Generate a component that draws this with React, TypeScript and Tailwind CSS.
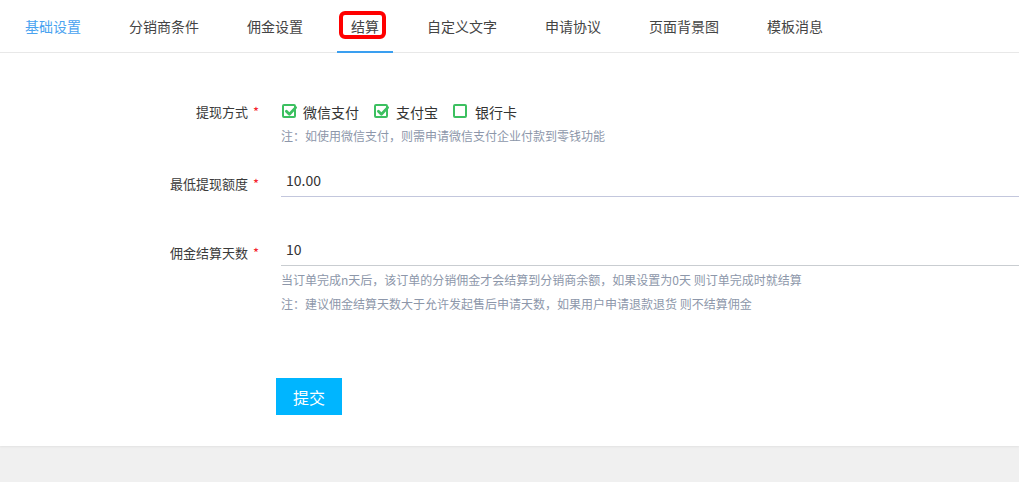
import React from "react";

const tabs = ["基础设置", "分销商条件", "佣金设置", "结算", "自定义文字", "申请协议", "页面背景图", "模板消息"];

function Check({ checked }: { checked: boolean }) {
  return (
    <span className="relative inline-flex h-[14px] w-[14px] items-center justify-center rounded-[2px] border-2 border-[#3cc060] bg-white">
      {checked && (
        <svg width="14" height="14" viewBox="0 0 14 14" className="absolute left-[0px] top-[-2px] overflow-visible">
          <path d="M2.4 7.2 L5.4 10.2 L11.6 3.6" fill="none" stroke="#3cc060" strokeWidth="2.8" strokeLinecap="round" strokeLinejoin="round" />
        </svg>
      )}
    </span>
  );
}

function Label({ text }: { text: string }) {
  return (
    <div className="w-[281px] shrink-0 pr-[22px] text-right text-[13px] text-[#3a3a3a]">
      {text}
      <span className="ml-[5px] text-[#f5222d]">*</span>
    </div>
  );
}

export default function App() {
  return (
    <div
      className="min-h-screen bg-[#f0f0f0]"
      style={{ fontFamily: '"Noto Sans CJK SC", "Noto Sans", sans-serif' }}
    >
      <div className="bg-white pb-[31px] shadow-[0_1px_2px_rgba(0,0,0,0.06)]">
        <div className="relative flex h-[53px] items-stretch border-b border-[#e8e8e8] pl-px">
          {tabs.map((t, i) => (
            <div key={t} className="relative flex items-center px-[24px] text-[14px]">
              <span className={i === 0 ? "text-[#4aa3f0]" : "text-[#444]"}>{t}</span>
              {i === 3 && (
                <>
                  <span className="absolute bottom-[-1px] left-[10px] right-[10px] h-[2px] bg-[#3a9ff0]" />
                  <span className="absolute left-[12px] top-[11px] h-[28px] w-[47px] rounded-[6px] border-[4px] border-[#ff0000]" />
                </>
              )}
            </div>
          ))}
        </div>

        <div className="mt-[47px] flex h-[24px] items-center">
          <Label text="提现方式" />
          <div className="flex items-center text-[14px] text-[#333]">
            <span className="ml-px"><Check checked /></span>
            <span className="ml-[7px]">微信支付</span>
            <span className="ml-[15px]"><Check checked /></span>
            <span className="ml-[8px]">支付宝</span>
            <span className="ml-[15px]"><Check checked={false} /></span>
            <span className="ml-[8px]">银行卡</span>
          </div>
        </div>
        <div className="ml-[281px] mt-[2px] text-[12px] leading-[20px] text-[#8d97aa]">
          注：如使用微信支付，则需申请微信支付企业付款到零钱功能
        </div>

        <div className="mt-[19px] flex items-start">
          <div className="pt-[8px] leading-[22px]">
            <Label text="最低提现额度" />
          </div>
          <div className="flex h-[32px] flex-1 items-center border-b border-[#c3c7dd] pl-[5px] text-[14px] text-[#333]">
            10.00
          </div>
        </div>

        <div className="mt-[37px] flex items-start">
          <div className="pt-[8px] leading-[22px]">
            <Label text="佣金结算天数" />
          </div>
          <div className="flex h-[32px] flex-1 items-center border-b border-[#c9cdd1] pl-[5px] text-[14px] text-[#333]">
            10
          </div>
        </div>
        <div className="ml-[281px] mt-[2px] text-[12px] leading-[24px] text-[#8d97aa]">
          <div>当订单完成n天后，该订单的分销佣金才会结算到分销商余额，如果设置为0天 则订单完成时就结算</div>
          <div>注：建议佣金结算天数大于允许发起售后申请天数，如果用户申请退款退货 则不结算佣金</div>
        </div>

        <div className="ml-[276px] mt-[62px]">
          <button className="h-[37px] w-[66px] bg-[#00b5ff] text-[16px] text-white">提交</button>
        </div>
      </div>
    </div>
  );
}
